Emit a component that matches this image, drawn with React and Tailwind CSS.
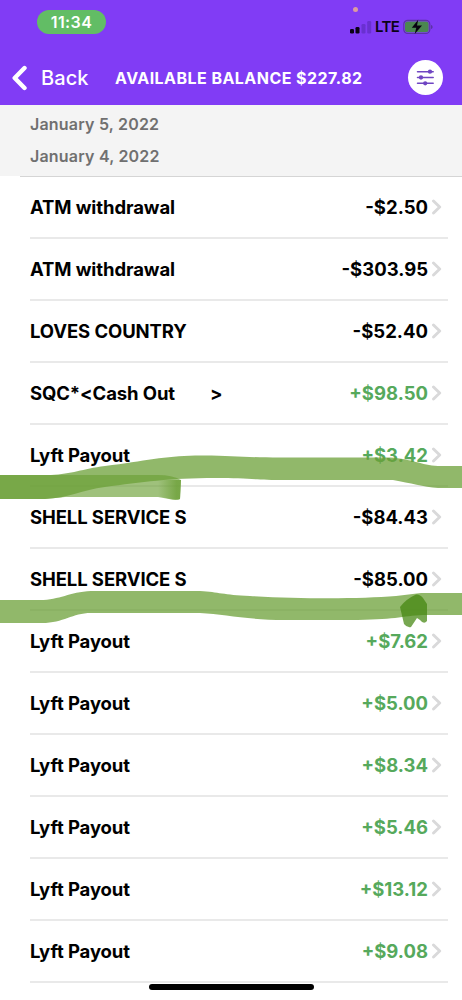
import React from "react";

const transactions = [
  { name: "ATM withdrawal", amount: "-$2.50" },
  { name: "ATM withdrawal", amount: "-$303.95" },
  { name: "LOVES COUNTRY", amount: "-$52.40" },
  { name: "SQC*<Cash Out", suffix: ">", amount: "+$98.50" },
  { name: "Lyft Payout", amount: "+$3.42" },
  { name: "SHELL SERVICE S", amount: "-$84.43" },
  { name: "SHELL SERVICE S", amount: "-$85.00" },
  { name: "Lyft Payout", amount: "+$7.62" },
  { name: "Lyft Payout", amount: "+$5.00" },
  { name: "Lyft Payout", amount: "+$8.34" },
  { name: "Lyft Payout", amount: "+$5.46" },
  { name: "Lyft Payout", amount: "+$13.12" },
  { name: "Lyft Payout", amount: "+$9.08" },
];

const StatusBar = () => (
  <div className="relative flex h-[50px] items-start justify-between pl-[37px] pr-[29px] pt-[10px]">
    <span className="flex h-6 w-[69px] items-center justify-center rounded-full bg-[#62bd65] text-[16px] font-semibold tracking-[0.4px] text-white">
      11:34
    </span>
    {/* Microphone in use dot */}
    <span className="absolute left-[353px] top-[7px] size-[5px] rounded-full bg-[#dc9aa0]" />
    <div className="mt-[7px] flex h-5 items-center">
      <svg width="22" height="14" viewBox="0 0 22 14">
        <rect x="0" y="9" width="4" height="4.5" rx="1.3" fill="#0b0217" />
        <rect x="5.5" y="7" width="4" height="6.5" rx="1.3" fill="#0b0217" />
        <rect x="11.5" y="4" width="4" height="9.5" rx="1.3" fill="#6930d0" />
        <rect x="17.2" y="1" width="4" height="12.5" rx="1.3" fill="#6930d0" />
      </svg>
      <span className="ml-[3px] w-[24px] text-[15px] font-semibold leading-5 tracking-[-0.6px] text-[#0b0217]">
        LTE
      </span>
      <svg className="-mt-px ml-[4px]" width="30" height="16" viewBox="0 0 30 16">
        <rect x="0.8" y="1.3" width="26" height="13.2" rx="4" fill="none" stroke="#5c32a5" strokeWidth="1.2" />
        <rect x="2" y="2.5" width="23.6" height="10.8" rx="2.8" fill="#4b8750" />
        <path d="M28 6v4c1-.3 1.6-1 1.6-2S29 6.300 28 6z" fill="#5c32a5" />
        <path d="M15.200.8 8.800 8.700h4.500L11.700 15l7.300-8.400h-5z" fill="#080310" />
      </svg>
    </div>
  </div>
);

const Header = () => (
  <header className="h-[105px] bg-[#813cf5]">
    <StatusBar />
    <div className="flex h-[55px] items-center pl-[12px] text-white">
      <svg width="16" height="26" viewBox="0 0 16 26">
        <path d="M12.500 3 2.700 13l9.800 10" fill="none" stroke="currentColor" strokeWidth="4.400" strokeLinecap="round" strokeLinejoin="round" />
      </svg>
      <span className="ml-[13px] w-[74px] text-[20px] font-medium tracking-[0.1px]">Back</span>
      <h1 className="w-[293px] whitespace-nowrap text-[16px] font-bold tracking-[0.45px]">
        AVAILABLE BALANCE $227.82
      </h1>
      <button className="flex size-[35px] items-center justify-center rounded-full bg-white">
        <svg width="19" height="17" viewBox="0 0 19 17" stroke="#6f45c2" fill="#6f45c2" strokeWidth="1.500" strokeLinecap="round">
          <path d="M1.500 2.700h15.700M1.500 8.500h15.700M1.500 14.300h15.700" />
          <circle cx="14" cy="2.700" r="1.400" />
          <circle cx="5" cy="8.500" r="1.400" />
          <circle cx="9.200" cy="14.300" r="1.400" />
        </svg>
      </button>
    </div>
  </header>
);

const Transaction = ({ name, suffix, amount }) => (
  <li className="ml-[30px] mr-[14px] flex h-[62px] items-center border-b-2 border-[#e9e9e9] text-[18.5px] font-[650]">
    <span className="whitespace-nowrap pt-[2px] tracking-[-0.1px]">{name}</span>
    {suffix && <span className="ml-[35px] pt-[2px]">{suffix}</span>}
    <span className={amount.startsWith("+") ? "ml-auto pt-[2px] text-[#56a95c]" : "ml-auto pt-[2px] text-black"}>
      {amount}
    </span>
    <svg className="ml-[4px] mr-[6px]" width="10" height="16" viewBox="0 0 10 16">
      <path d="m1.500 2 6.200 6-6.200 6" fill="none" stroke="#d9d9da" strokeWidth="2.900" strokeLinecap="round" strokeLinejoin="round" />
    </svg>
  </li>
);

/* Hand drawn highlighter over the list */
const Highlights = () => (
  <svg className="pointer-events-none absolute left-0 top-0" width="462" height="1000" viewBox="0 0 462 1000">
    <defs>
      <linearGradient id="tail" x1="0" x2="1">
        <stop offset="0" stopColor="#6b9f36" stopOpacity="0" />
        <stop offset="0.8" stopColor="#6b9f36" stopOpacity="0.75" />
      </linearGradient>
    </defs>
    <g fill="#6b9f36" fillOpacity="0.74">
      <path d="M0 475H51C72 474 82 469 105 466C145 461 165 456 195 455.500C235 455 245 458 290 457.500H390C412 459 421 465 438 466H462V488H438C423 487 411 483 393 480H285C254 480 248 478 215 478C170 478 142 482 105 487C82 490 69 498 45 499H0Z" />
      <path fillOpacity="0.65" d="M0 475H158Q172 475 181 480L180 499Q176 501 169 499L158 497H65L45 499H0Z" />
      <path d="M0 600H40C60 600 69 592 91 591H200C219 592 223 595 250 596C301 599 360 599 396 596L421 593H462V615H423C402 616 394 620 350 620H285C246 620 225 614 200 613H91C72 613 64 623 42 623H0Z" />
      <path fill="#42850e" fillOpacity="0.72" d="M400 607Q406 599 416 594.500Q420 594 423 598L427 604V621Q424 625 420 620L417 618L411 627Q407 628 404 624Z" />
    </g>
    <path fill="url(#tail)" d="M158 480 181 480 180 499Q176 501 158 496Z" />
  </svg>
);

const App = () => {
  return (
    <main className="relative h-[1000px] w-[462px] overflow-hidden bg-white font-['Inter',sans-serif] text-black">
      <Header />
      <div className="h-[71px] bg-[#f4f4f4] pl-[30px] pt-[3px] text-[16px] font-semibold leading-[32px] tracking-[0.2px] text-[#707070]">
        <p>January 5, 2022</p>
        <p>January 4, 2022</p>
      </div>
      <div className="ml-5 h-px bg-[#d5d5d5]" />
      <ul>
        {transactions.map((transaction, index) => (
          <Transaction key={index} {...transaction} />
        ))}
      </ul>
      <Highlights />
      <div className="absolute left-[149px] top-[984px] h-[6px] w-[165px] rounded-full bg-black" />
    </main>
  );
};

export default App;
